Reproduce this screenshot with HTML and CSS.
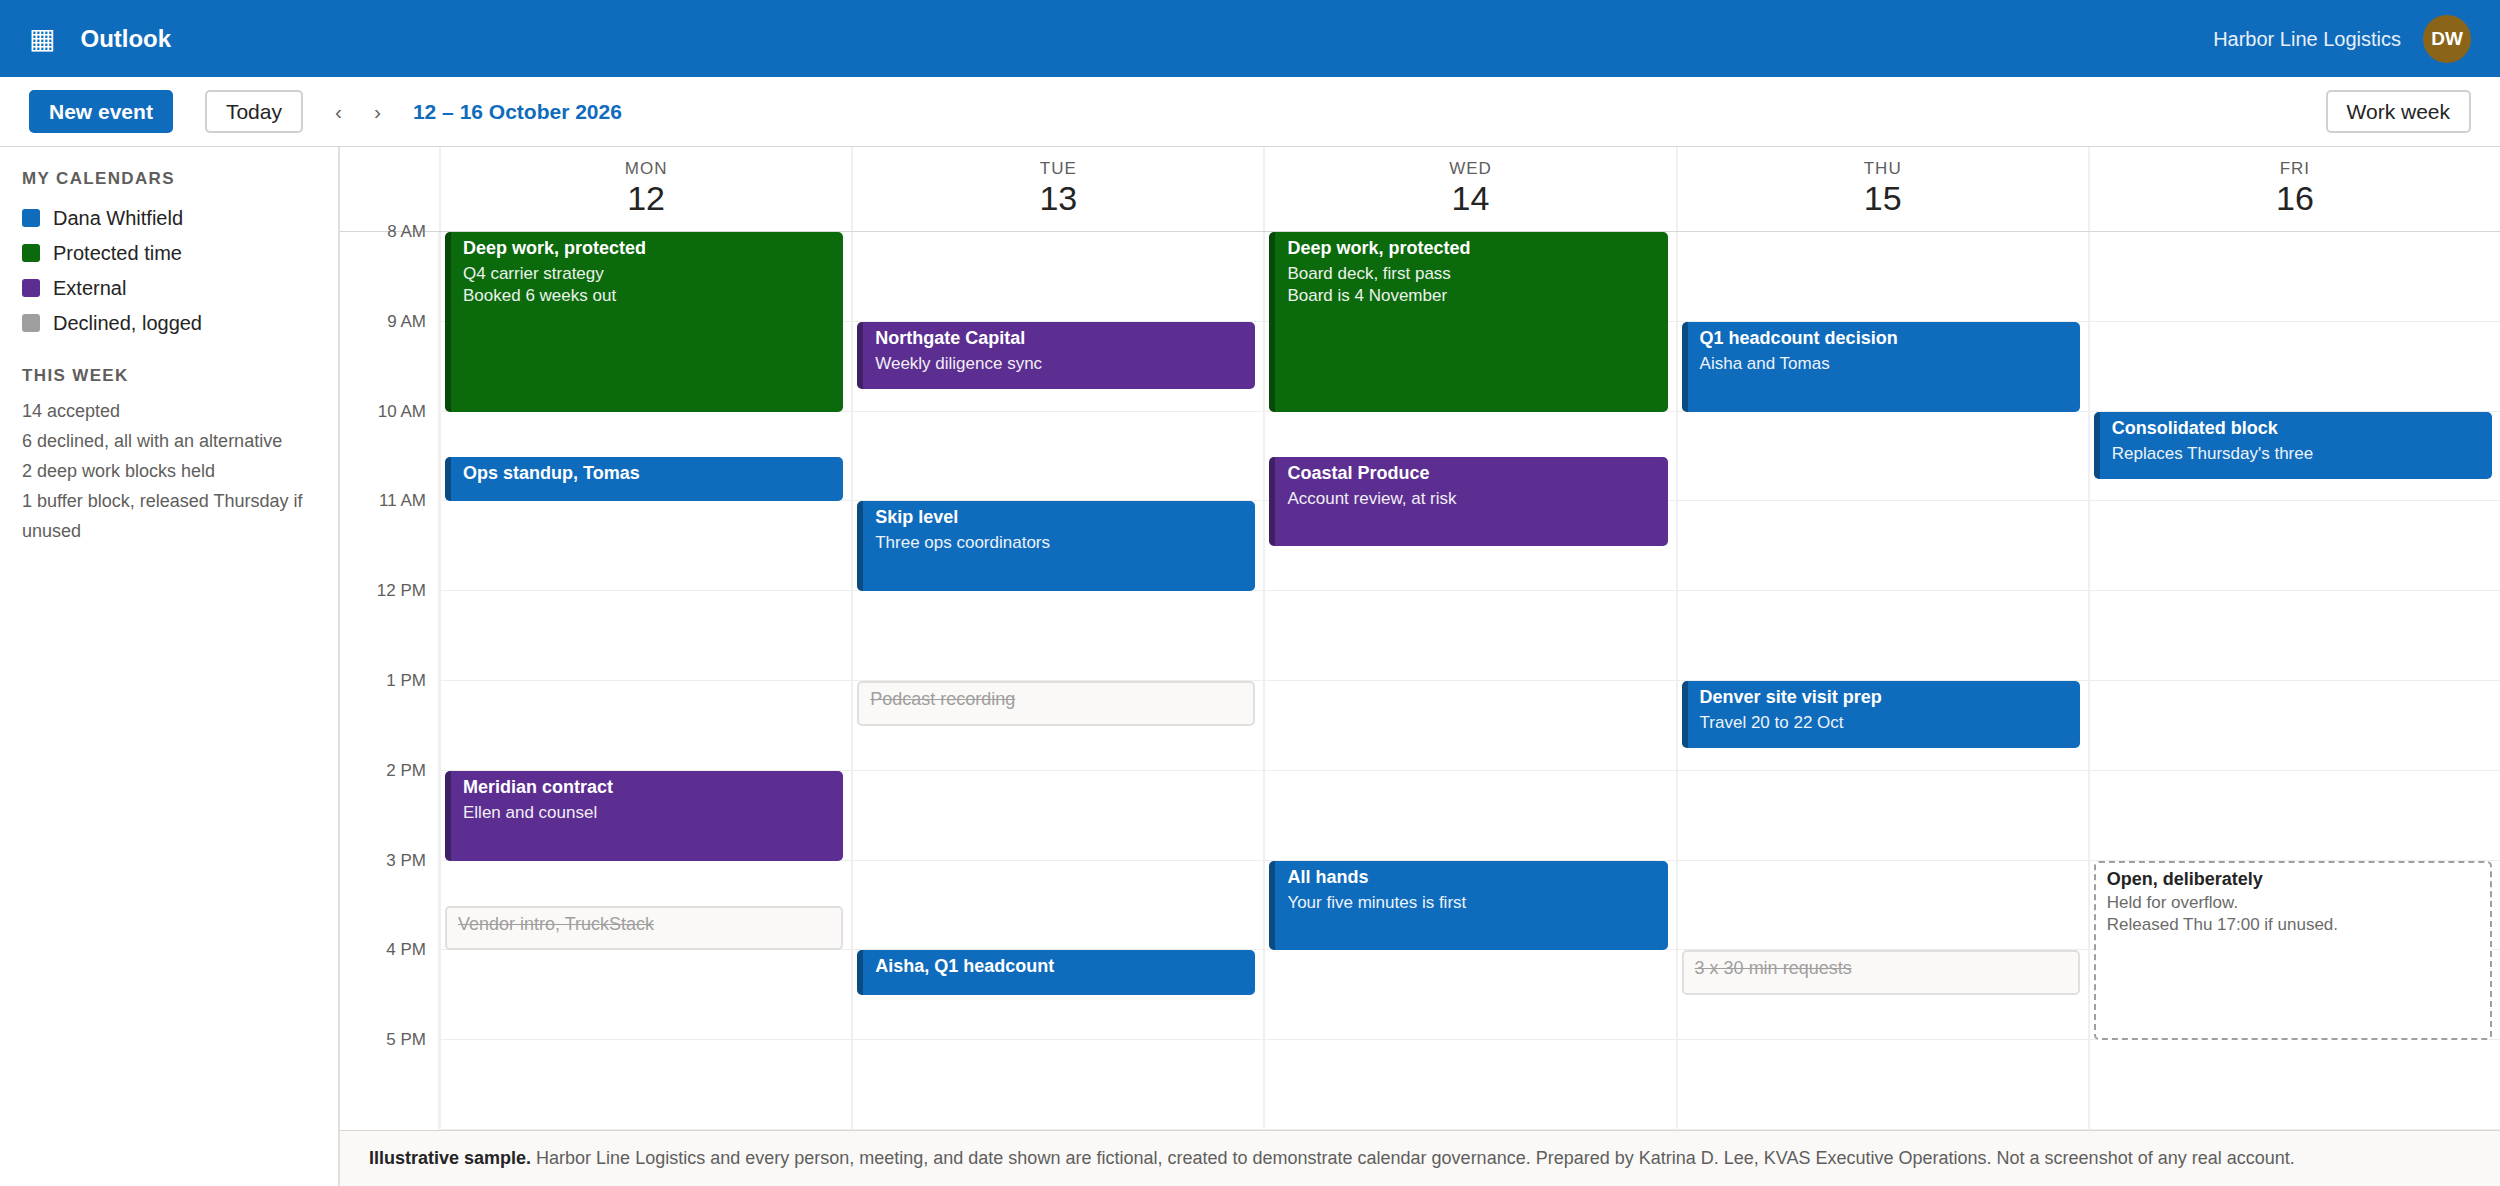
FILE: index.html
```html
<!doctype html>
<html lang="en">
	<head>
		<title>Outlook - Calendar</title>
		<meta charset="utf-8">
		<meta name="viewport" content="width=device-width, initial-scale=1.0">

		<link rel="stylesheet" href="styles.css">
	</head>
	<body>

<header class="topbar">
	<span class="waffle">▦</span>
	<b class="brand">Outlook</b>
	<span class="org">Harbor Line Logistics</span>
	<span class="avatar">DW</span>
</header>

<div class="toolbar">
	<button class="btn primary">New event</button>
	<button class="btn">Today</button>
	<button class="arrow" aria-label="Previous week">‹</button>
	<button class="arrow" aria-label="Next week">›</button>
	<span class="range">12 – 16 October 2026</span>
	<button class="btn view">Work week</button>
</div>

<div class="layout">

	<aside class="sidebar">
		<h2>My calendars</h2>
		<ul class="calendars">
			<li><span class="swatch blue"></span>Dana Whitfield</li>
			<li><span class="swatch green"></span>Protected time</li>
			<li><span class="swatch purple"></span>External</li>
			<li><span class="swatch grey"></span>Declined, logged</li>
		</ul>
		<h2>This week</h2>
		<ul class="stats">
			<li>14 accepted</li>
			<li>6 declined, all with an alternative</li>
			<li>2 deep work blocks held</li>
			<li>1 buffer block, released Thursday if unused</li>
		</ul>
	</aside>

	<main class="calendar">

		<div class="days">
			<div></div>
			<div class="day"><span>Mon</span><b>12</b></div>
			<div class="day"><span>Tue</span><b>13</b></div>
			<div class="day"><span>Wed</span><b>14</b></div>
			<div class="day"><span>Thu</span><b>15</b></div>
			<div class="day"><span>Fri</span><b>16</b></div>
		</div>

		<!-- every column is 40 quarter hours, 8 AM to 6 PM -->
		<div class="week">
			<div class="hours">
				<span>8 AM</span>
				<span>9 AM</span>
				<span>10 AM</span>
				<span>11 AM</span>
				<span>12 PM</span>
				<span>1 PM</span>
				<span>2 PM</span>
				<span>3 PM</span>
				<span>4 PM</span>
				<span>5 PM</span>
			</div>

			<div class="lines">
				<i></i><i></i><i></i><i></i><i></i><i></i><i></i><i></i><i></i><i></i>
			</div>

			<div class="column mon">
				<div class="event green" style="grid-row: 1 / span 8"><b>Deep work, protected</b><p>Q4 carrier strategy<br>Booked 6 weeks out</p></div>
				<div class="event blue" style="grid-row: 11 / span 2"><b>Ops standup, Tomas</b></div>
				<div class="event purple" style="grid-row: 25 / span 4"><b>Meridian contract</b><p>Ellen and counsel</p></div>
				<div class="event declined" style="grid-row: 31 / span 2"><s>Vendor intro, TruckStack</s></div>
			</div>

			<div class="column tue">
				<div class="event purple" style="grid-row: 5 / span 3"><b>Northgate Capital</b><p>Weekly diligence sync</p></div>
				<div class="event blue" style="grid-row: 13 / span 4"><b>Skip level</b><p>Three ops coordinators</p></div>
				<div class="event declined" style="grid-row: 21 / span 2"><s>Podcast recording</s></div>
				<div class="event blue" style="grid-row: 33 / span 2"><b>Aisha, Q1 headcount</b></div>
			</div>

			<div class="column wed">
				<div class="event green" style="grid-row: 1 / span 8"><b>Deep work, protected</b><p>Board deck, first pass<br>Board is 4 November</p></div>
				<div class="event purple" style="grid-row: 11 / span 4"><b>Coastal Produce</b><p>Account review, at risk</p></div>
				<div class="event blue" style="grid-row: 29 / span 4"><b>All hands</b><p>Your five minutes is first</p></div>
			</div>

			<div class="column thu">
				<div class="event blue" style="grid-row: 5 / span 4"><b>Q1 headcount decision</b><p>Aisha and Tomas</p></div>
				<div class="event blue" style="grid-row: 21 / span 3"><b>Denver site visit prep</b><p>Travel 20 to 22 Oct</p></div>
				<div class="event declined" style="grid-row: 33 / span 2"><s>3 x 30 min requests</s></div>
			</div>

			<div class="column fri">
				<div class="event blue" style="grid-row: 9 / span 3"><b>Consolidated block</b><p>Replaces Thursday's three</p></div>
				<div class="event open" style="grid-row: 29 / span 8"><b>Open, deliberately</b><p>Held for overflow.<br>Released Thu 17:00 if unused.</p></div>
			</div>
		</div>

		<footer class="note"><b>Illustrative sample.</b> Harbor Line Logistics and every person, meeting, and date shown are fictional, created to demonstrate calendar governance. Prepared by Katrina D. Lee, KVAS Executive Operations. Not a screenshot of any real account.</footer>

	</main>

</div>

	</body>
</html>
```
FILE: styles.css
```css
* {
	box-sizing: border-box;
	margin: 0;
	padding: 0;
}
body {
	display: flex;
	flex-direction: column;
	min-height: 100vh;
	background: #ffffff;
	color: #242424;
	font-family: "Liberation Sans", Arial, sans-serif;
	font-size: 18px;
	line-height: 24px;
}
ul { list-style: none; }
button { font-family: inherit; cursor: pointer; }

/* top bar */
.topbar {
	display: flex;
	align-items: center;
	height: 77px;
	padding: 0 29px;
	background: #0f6cbd;
	color: #ffffff;
}
.waffle { margin-right: 25px; font-family: "DejaVu Sans", sans-serif; font-size: 28px; }
.brand { font-size: 24px; }
.org { margin-left: auto; font-size: 20px; opacity: .9; }
.avatar {
	width: 48px;
	height: 48px;
	margin-left: 22px;
	border-radius: 50%;
	background: #8a6418;
	font-size: 19px;
	font-weight: bold;
	line-height: 48px;
	text-align: center;
}

/* toolbar */
.toolbar {
	display: flex;
	align-items: center;
	gap: 32px;
	padding: 13px 29px;
	border-bottom: 1px solid #d8d6d4;
	font-size: 21px;
}
.btn {
	height: 43px;
	padding: 0 19px;
	border: 2px solid #d2d0ce;
	border-radius: 5px;
	background: #ffffff;
	color: #242424;
	font-size: 21px;
}
.primary { padding: 0 18px; border-color: #0f6cbd; background: #0f6cbd; color: #ffffff; font-weight: bold; }
.view { margin-left: auto; }
.arrow { border: 0; background: none; color: #605e5c; font-size: 21px; }
.range { color: #0f6cbd; font-weight: bold; }

.layout { display: flex; flex: 1; }

/* sidebar */
.sidebar {
	flex: none;
	width: 340px;
	padding: 22px;
	border-right: 2px solid #e1dfdd;
}
.sidebar h2 {
	margin-bottom: 10px;
	color: #605e5c;
	font-size: 17px;
	line-height: 20px;
	letter-spacing: .08em;
	text-transform: uppercase;
}
.calendars { padding-top: 1px; margin-bottom: 26px; font-size: 20px; }
.calendars li { display: flex; align-items: center; height: 35px; }
.swatch { width: 18px; height: 18px; margin-right: 13px; border-radius: 3px; }
.stats { color: #605e5c; font-size: 18px; line-height: 30px; }

.blue { background: #0f6cbd; }
.green { background: #0b6a0b; }
.purple { background: #5c2e91; }
.grey { background: #a19f9d; }

/* calendar */
.calendar { display: flex; flex: 1; flex-direction: column; min-width: 0; }
.days, .week {
	display: grid;
	grid-template-columns: 99px repeat(5, minmax(0, 1fr));
}
.days { border-bottom: 1px solid #d8d6d4; }
.day {
	padding: 12px 0 14px;
	border-left: 2px solid #f0f0f0;
	text-align: center;
}
.day span, .day b { display: block; }
.day span {
	color: #605e5c;
	font-size: 17px;
	line-height: 20px;
	letter-spacing: .06em;
	text-transform: uppercase;
}
.day b { font-size: 34px; font-weight: normal; line-height: 38px; }

.week { flex: 1; }
.hours, .lines, .column {
	display: grid;
	grid-row: 1;
}
.hours, .lines { grid-template-rows: repeat(10, minmax(0, 1fr)); }
.hours {
	grid-column: 1;
	padding-right: 12px;
	border-right: 1px solid #f0f0f0;
	color: #605e5c;
	font-size: 17px;
	line-height: 20px;
	text-align: right;
}
.hours span { margin-top: -10px; }
.lines { grid-column: 2 / -1; }
.lines i { border-bottom: 1px solid #ededed; }
.column {
	grid-template-rows: repeat(40, minmax(0, 1fr));
	padding: 0 8px 0 4px;
	border-left: 2px solid #f0f0f0;
}
.mon { grid-column: 2; }
.tue { grid-column: 3; }
.wed { grid-column: 4; }
.thu { grid-column: 5; }
.fri { grid-column: 6; }

.event {
	overflow: hidden;
	padding: 4px 12px;
	border-left: 6px solid rgba(0,0,0,.3);
	border-radius: 5px;
	color: #ffffff;
}
.event b { display: block; }
.event p { margin-top: 3px; font-size: 17px; line-height: 22px; opacity: .92; }
.declined {
	padding: 4px 11px;
	border: 2px solid #e1dfdd;
	background: #faf9f8;
	color: #a19f9d;
}
.open {
	padding: 4px 11px;
	border: 2px dashed #a19f9d;
	background: #ffffff;
	color: #242424;
}
.open p { margin-top: 1px; color: #605e5c; }

.note {
	padding: 15px 29px 16px;
	border-top: 1px solid #d8d6d4;
	background: #faf9f8;
	color: #605e5c;
}
.note b { color: #242424; }
```
